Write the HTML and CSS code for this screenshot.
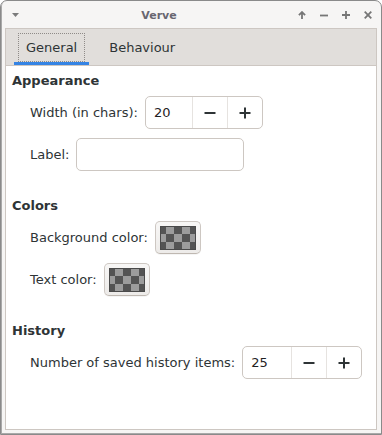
FILE: index.html
```html
<!DOCTYPE html>
<html>
<head>
<meta charset="utf-8">
<title>Verve</title>
<link rel="stylesheet" href="styles.css">
</head>
<body>
<div class="window">
  <div class="titlebar">
    <div class="tb-left">
      <svg class="tb-menu" width="7" height="4" viewBox="0 0 7 4"><polygon points="0,0 7,0 3.5,4"/></svg>
    </div>
    <div class="title">Verve</div>
    <div class="tb-buttons">
      <span class="tb-btn"><svg width="8" height="8" viewBox="0 0 8 8"><path d="M4 8V1.2M0.9 4.2L4 1.1L7.1 4.2"/></svg></span>
      <span class="tb-btn"><svg width="8" height="8" viewBox="0 0 8 8"><path d="M0 4.5H8"/></svg></span>
      <span class="tb-btn"><svg width="8" height="8" viewBox="0 0 8 8"><path d="M4 0V8M0 4H8"/></svg></span>
      <span class="tb-btn"><svg width="8" height="8" viewBox="0 0 8 8"><path d="M0.7 0.7L7.3 7.3M7.3 0.7L0.7 7.3"/></svg></span>
    </div>
  </div>
  <div class="notebook">
    <div class="tabs">
      <div class="tab tab-active"><span class="tab-label">General</span></div>
      <div class="tab"><span class="tab-label">Behaviour</span></div>
    </div>
    <div class="page">
      <section class="group">
        <h2 class="group-title">Appearance</h2>
        <div class="row">
          <span class="label">Width (in chars):</span>
          <div class="spin">
            <span class="spin-value spin-value-narrow">20</span>
            <span class="spin-btn"><svg width="12" height="12" viewBox="0 0 12 12"><path d="M0.5 6H11.5"/></svg></span>
            <span class="spin-btn"><svg width="12" height="12" viewBox="0 0 12 12"><path d="M0.5 6H11.5M6 0.5V11.5"/></svg></span>
          </div>
        </div>
        <div class="row">
          <span class="label">Label:</span>
          <div class="entry"></div>
        </div>
      </section>
      <section class="group">
        <h2 class="group-title">Colors</h2>
        <div class="row">
          <span class="label">Background color:</span>
          <div class="color-btn"><span class="swatch"></span></div>
        </div>
        <div class="row">
          <span class="label">Text color:</span>
          <div class="color-btn"><span class="swatch"></span></div>
        </div>
      </section>
      <section class="group">
        <h2 class="group-title">History</h2>
        <div class="row">
          <span class="label">Number of saved history items:</span>
          <div class="spin">
            <span class="spin-value spin-value-wide">25</span>
            <span class="spin-btn"><svg width="12" height="12" viewBox="0 0 12 12"><path d="M0.5 6H11.5"/></svg></span>
            <span class="spin-btn"><svg width="12" height="12" viewBox="0 0 12 12"><path d="M0.5 6H11.5M6 0.5V11.5"/></svg></span>
          </div>
        </div>
      </section>
    </div>
  </div>
</div>
</body>
</html>
```

FILE: styles.css
```css
html, body {
  margin: 0;
  padding: 0;
  background: #ffffff;
}

body {
  font-family: "DejaVu Sans", "Liberation Sans", sans-serif;
  font-size: 13px;
  color: #2e3436;
}

.window {
  box-sizing: border-box;
  width: 382px;
  height: 435px;
  border: 1px solid #8a8a8a;
  border-radius: 7px 7px 0 0;
  background: #f6f5f4;
  box-shadow: inset 1px -1px 0 #a9a9a9;
  display: flex;
  flex-direction: column;
  padding: 0 4px 4px 4px;
}

/* Title bar */
.titlebar {
  height: 27px;
  margin: 0 -4px;
  display: flex;
  align-items: center;
  padding-right: 2px;
}

.tb-left {
  width: 26px;
  display: flex;
  align-items: center;
}

.tb-menu {
  margin-left: 11px;
  margin-top: 1px;
  fill: #7b7b7b;
}

.title {
  flex: 1;
  text-align: center;
  font-weight: bold;
  font-size: 11px;
  color: #686670;
  margin-top: 1px;
}

.tb-buttons {
  display: flex;
}

.tb-btn {
  width: 22px;
  display: flex;
  justify-content: center;
  align-items: center;
  margin-top: 1px;
}

.tb-btn svg {
  fill: none;
  stroke: #767676;
  stroke-width: 1.8;
}

/* Notebook */
.notebook {
  flex: 1;
  border: 1px solid #cdc7c2;
  background: #ffffff;
  display: flex;
  flex-direction: column;
}

.tabs {
  height: 36px;
  background: #e1dedb;
  border-bottom: 1px solid #cdc7c2;
  display: flex;
  gap: 8px;
  padding: 0 8px;
}

.tab {
  box-sizing: border-box;
  height: 36px;
  padding: 4px 4px 0 4px;
  border-bottom: 3px solid transparent;
  display: flex;
}

.tab-active {
  border-bottom-color: #3584e4;
}

.tab-label {
  box-sizing: border-box;
  height: 29px;
  padding: 0 7px;
  border: 1px solid transparent;
  display: flex;
  align-items: center;
  color: #2e3436;
}

.tab-active .tab-label {
  border: 1px dotted #8f8b88;
}

/* Page */
.page {
  padding: 7px 6px 0 6px;
}

.group {
  margin-bottom: 27px;
}

.group-title {
  margin: 0 0 7px 0;
  font-size: 13px;
  line-height: 16px;
  font-weight: bold;
  color: #2e3436;
}

.row {
  display: flex;
  align-items: center;
  gap: 7px;
  padding-left: 18px;
  margin-bottom: 9px;
}

.row:last-child {
  margin-bottom: 0;
}

.label {
  line-height: 16px;
  color: #2e3436;
}

/* Spin button */
.spin {
  box-sizing: border-box;
  height: 33px;
  border: 1px solid #cdc7c2;
  border-radius: 5px;
  background: #ffffff;
  display: flex;
}

.spin-value {
  box-sizing: border-box;
  padding-left: 8px;
  display: flex;
  align-items: center;
  color: #1f2223;
}

.spin-value-narrow {
  width: 46px;
}

.spin-value-wide {
  width: 48px;
}

.spin-btn {
  width: 34px;
  border-left: 1px solid #e6e3e0;
  display: flex;
  align-items: center;
  justify-content: center;
}

.spin-btn svg {
  fill: none;
  stroke: #2e3436;
  stroke-width: 2;
}

/* Entry */
.entry {
  box-sizing: border-box;
  width: 168px;
  height: 33px;
  border: 1px solid #cdc7c2;
  border-radius: 5px;
  background: #ffffff;
}

/* Color button */
.color-btn {
  box-sizing: border-box;
  width: 46px;
  height: 33px;
  border: 1px solid #cdc7c2;
  border-bottom-color: #bfb8b1;
  border-radius: 5px;
  background: linear-gradient(#f8f7f6, #edebe9);
  box-shadow: 0 1px 0 rgba(0, 0, 0, 0.04);
  display: flex;
  align-items: center;
  justify-content: center;
}

.swatch {
  box-sizing: border-box;
  width: 36px;
  height: 24px;
  border: 1px solid #4a4a4a;
  background: conic-gradient(#9c9c9c 25%, #545454 0 50%, #9c9c9c 0 75%, #545454 0);
  background-size: 16px 16px;
  background-position: -3px -1px;
}
```
